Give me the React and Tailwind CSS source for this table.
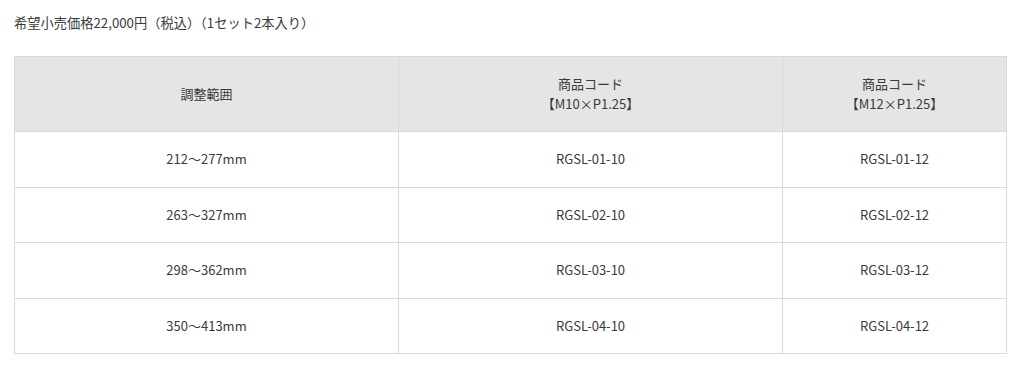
export default function App() {
  const rows = [
    ["212～277mm", "RGSL-01-10", "RGSL-01-12"],
    ["263～327mm", "RGSL-02-10", "RGSL-02-12"],
    ["298～362mm", "RGSL-03-10", "RGSL-03-12"],
    ["350～413mm", "RGSL-04-10", "RGSL-04-12"],
  ];
  return (
    <div
      className="w-[1023px] h-[384px] bg-white text-[#3a3a3a] text-[13px] leading-[20px]"
      style={{ fontFamily: '"Noto Sans CJK JP", "Noto Sans", sans-serif' }}
    >
      <div className="pl-[14px] pt-[13px] h-[56px] text-[13.25px]">希望小売価格22,000円（税込）（1セット2本入り）</div>
      <table className="ml-[14px] w-[992px] border-collapse table-fixed">
        <colgroup>
          <col className="w-[384px]" />
          <col className="w-[384px]" />
          <col className="w-[224px]" />
        </colgroup>
        <thead>
          <tr className="h-[75px] bg-[#e5e5e5]">
            <th className="border border-[#d9d9d9] font-normal text-center align-middle">調整範囲</th>
            <th className="border border-[#d9d9d9] font-normal text-center align-middle">
              商品コード
              <br />
              【M10×P1.25】
            </th>
            <th className="border border-[#d9d9d9] font-normal text-center align-middle">
              商品コード
              <br />
              【M12×P1.25】
            </th>
          </tr>
        </thead>
        <tbody>
          {rows.map((r, i) => (
            <tr key={i} className="h-[55.5px]">
              {r.map((c, j) => (
                <td key={j} className="border border-[#d9d9d9] text-center align-middle">
                  {c}
                </td>
              ))}
            </tr>
          ))}
        </tbody>
      </table>
    </div>
  );
}
